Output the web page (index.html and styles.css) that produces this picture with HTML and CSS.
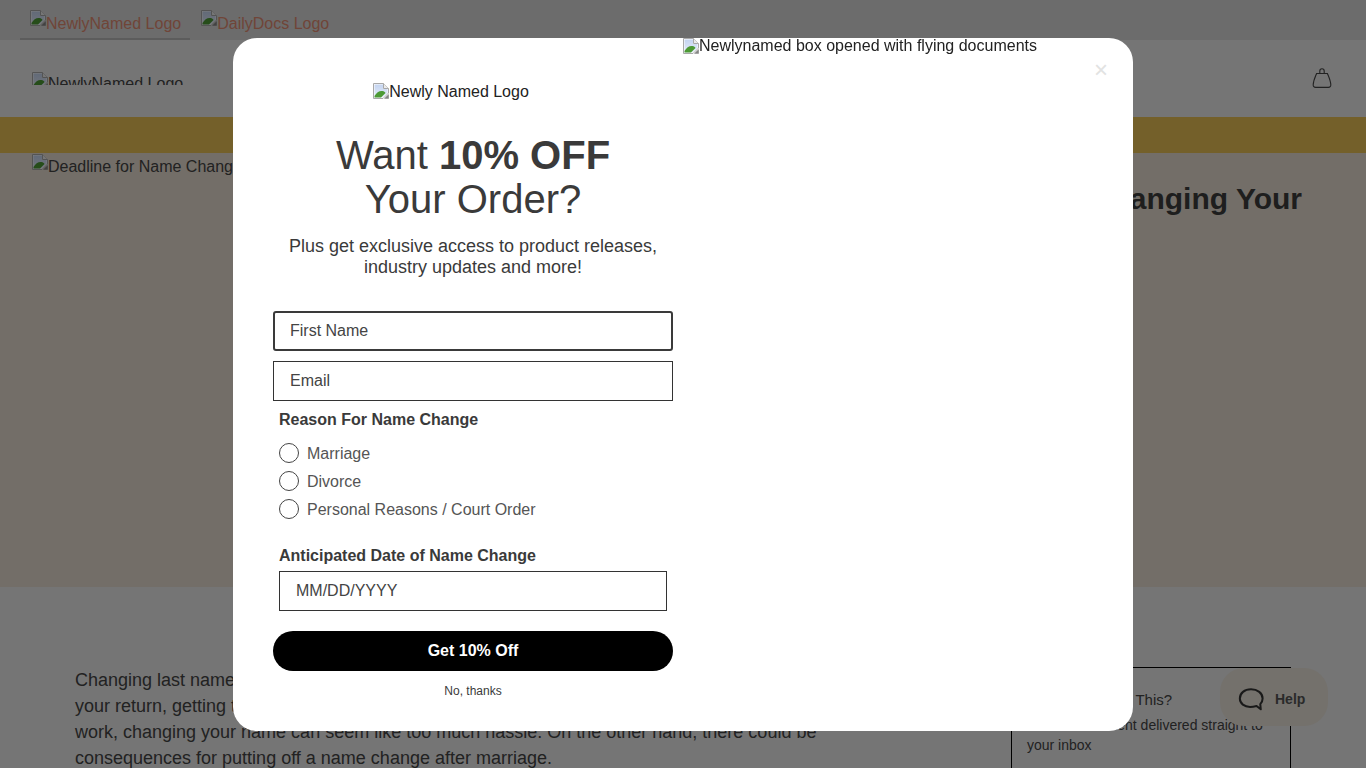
FILE: index.html
```html
<!DOCTYPE html>
<html lang="en">
<head>
<meta charset="utf-8">
<title>Deadline for Changing Your Name</title>
<link rel="stylesheet" href="styles.css">
</head>
<body>
<svg class="defs" width="0" height="0" aria-hidden="true">
  <defs>
    <linearGradient id="sky" x1="0" y1="0" x2="0" y2="1"><stop offset="0" stop-color="#c4d4f0"/><stop offset="1" stop-color="#e4ecfa"/></linearGradient>
    <symbol id="broken" viewBox="0 0 16 16">
      <path d="M0.5 0.5H10.5L15.5 5.5V10L10 15.5H0.5Z" fill="#fff" stroke="#a8a8a8"/>
      <path d="M1.5 1.5H10V6H14.5V10L9.5 14.5H1.5Z" fill="url(#sky)"/>
      <path d="M1.5 14.5V13C3.5 9.5 6.5 7.5 9.5 8C11 8.3 12 9 12.5 10L8 14.5Z" fill="#4c9a34"/>
      <path d="M10.5 0.5V5.5H15.5" fill="#ececec" stroke="#a8a8a8"/>
      <path d="M15.8 11V15.8H11Z" fill="#858585"/>
    </symbol>
  </defs>
</svg>

<nav class="topbar">
  <a class="toplink toplink-active"><svg class="bi bi-top"><use href="#broken"/></svg>NewlyNamed Logo</a>
  <a class="toplink"><svg class="bi bi-top"><use href="#broken"/></svg>DailyDocs Logo</a>
</nav>

<header class="header">
  <div class="site-logo"><svg class="bi bi-site"><use href="#broken"/></svg>NewlyNamed Logo</div>
  <svg class="bag" viewBox="0 0 20 22" fill="none" stroke="#444" stroke-width="1.1">
    <path d="M7.8 6.5V4C7.8 2.6 8.7 1.8 10 1.8S12.2 2.6 12.2 4V6.5"/>
    <path d="M4.6 6.5H15.4C16.6 9.5 18.6 13.5 18.8 17.8C18.9 19.5 18 20.4 16.4 20.4H3.6C2 20.4 1.1 19.5 1.2 17.8C1.4 13.5 3.4 9.5 4.6 6.5Z"/>
  </svg>
</header>

<div class="promo-strip"></div>

<section class="hero">
  <div class="hero-image"><svg class="bi bi-hero"><use href="#broken"/></svg>Deadline for Name Change</div>
  <h1 class="hero-title">Deadline for Changing Your<br>Name</h1>
</section>

<main class="content">
  <article class="article">
    <p>Changing last names after marriage is a big decision. Between filing<br>
    your return, getting the paperwork together and taking time off from<br>
    work, changing your name can seem like too much hassle. On the other hand, there could be<br>
    consequences for putting off a name change after marriage.</p>
  </article>
  <aside class="signup-card">
    <h2 class="signup-title">Want More Like This?</h2>
    <p class="signup-text">Get latest content delivered straight to your inbox</p>
  </aside>
</main>

<div class="help-widget">
  <svg class="help-icon" viewBox="0 0 28 26" fill="none" stroke="#333" stroke-width="2.2">
    <path d="M14 2C7 2 2 6 2 12C2 17.5 7 21 13 21C16 21 18 20.5 20 20L24.5 23.5L24 18C25.5 16.5 26.5 14.5 26.5 12C26.5 6 21 2 14 2Z" stroke-linejoin="round"/>
  </svg>
  <span class="help-label">Help</span>
</div>

<div class="overlay"></div>

<div class="modal">
  <div class="modal-form">
    <div class="form-logo"><svg class="bi bi-form"><use href="#broken"/></svg>Newly Named Logo</div>
    <h2 class="offer-title">Want <b>10% OFF</b><br>Your Order?</h2>
    <p class="offer-sub">Plus get exclusive access to product releases,<br>industry updates and more!</p>
    <div class="field field-focus">First Name</div>
    <div class="field field-next">Email</div>
    <div class="group-label group-reason">Reason For Name Change</div>
    <div class="radios">
      <div class="radio-row"><span class="radio"></span><span class="radio-text">Marriage</span></div>
      <div class="radio-row"><span class="radio"></span><span class="radio-text">Divorce</span></div>
      <div class="radio-row"><span class="radio"></span><span class="radio-text">Personal Reasons / Court Order</span></div>
    </div>
    <div class="group-label group-date">Anticipated Date of Name Change</div>
    <div class="field field-date">MM/DD/YYYY</div>
    <div class="submit">Get 10% Off</div>
    <div class="decline">No, thanks</div>
  </div>
  <div class="modal-art">
    <div class="art-alt"><svg class="bi bi-art"><use href="#broken"/></svg>Newlynamed box opened with flying documents</div>
    <div class="close">&#215;</div>
  </div>
</div>
</body>
</html>
```

FILE: styles.css
```css
* { box-sizing: border-box; }
html, body { height: 100%; overflow: hidden; }
body {
  margin: 0;
  background: #eaeaea;
  color: #444;
  font-family: "Liberation Sans", Arial, sans-serif;
  font-size: 16px;
}
.defs { position: absolute; }
h1, h2, p { margin: 0; }

.bi { width: 16px; height: 16px; display: inline-block; }
.bi-top { vertical-align: 3px; }
.bi-site { vertical-align: 1px; }
.bi-hero { vertical-align: 2px; }
.bi-form { vertical-align: -2px; }
.bi-art { vertical-align: -3px; }

.topbar {
  height: 40px;
  background: #d8d8d8;
  display: flex;
  align-items: flex-start;
  gap: 1px;
  padding: 0 20px;
}
.toplink {
  height: 40px;
  padding: 10px 9px 0 10px;
  color: #e08a70;
  line-height: 16px;
  white-space: nowrap;
}
.toplink-active { border-bottom: 2px solid #b8b8b8; }

.header {
  height: 77px;
  background: #eaeaea;
  display: flex;
  align-items: center;
  justify-content: space-between;
  padding: 0 34px 0 32px;
}
.site-logo {
  height: 13px;
  overflow: hidden;
  line-height: 22px;
  color: #444;
}
.bag { width: 20px; height: 22px; margin-top: -1px; }

.promo-strip { height: 36px; background: #e8c054; }

.hero {
  height: 434px;
  background: #e6dcd0;
  display: flex;
  justify-content: space-between;
  padding: 0 64px 0 32px;
  color: #444;
}
.hero-image { line-height: 28px; white-space: nowrap; }
.hero-title {
  margin-top: 28px;
  font-size: 30px;
  line-height: 36px;
  font-weight: 700;
  color: #3c3c3c;
  white-space: nowrap;
}

.content {
  display: grid;
  grid-template-columns: 1fr 280px;
  padding: 80px 75px 0;
}
.article p {
  font-size: 18px;
  line-height: 26px;
  color: #444;
}
.signup-card {
  height: 200px;
  border: 1px solid #000;
  border-bottom: 0;
  padding: 23px 15px 0;
}
.signup-title { font-size: 15px; line-height: 18px; font-weight: 400; }
.signup-text { margin-top: 6px; font-size: 14px; line-height: 20px; }

.help-widget {
  position: fixed;
  right: 38px;
  bottom: 42px;
  width: 108px;
  height: 58px;
  border-radius: 24px;
  background: #e8e2d8;
  display: flex;
  align-items: center;
  gap: 11px;
  padding: 4px 0 0 18px;
}
.help-icon { width: 26px; height: 25px; }
.help-label { font-size: 14px; font-weight: 700; color: #555; }

.overlay {
  position: fixed;
  inset: 0;
  background: rgba(0, 0, 0, 0.5);
}

.modal {
  position: fixed;
  left: 233px;
  top: 38px;
  width: 900px;
  height: 693px;
  border-radius: 24px;
  background: #fff;
  display: grid;
  grid-template-columns: 450px 450px;
  color: #3a3a3a;
}
.modal-form {
  padding: 45px 10px 0 40px;
  display: flex;
  flex-direction: column;
  align-items: stretch;
}
.form-logo { line-height: 18px; text-align: center; color: #222; padding-right: 44px; }
.offer-title {
  margin-top: 32px;
  font-size: 40px;
  line-height: 44px;
  font-weight: 400;
  text-align: center;
}
.offer-sub {
  margin-top: 15px;
  font-size: 18px;
  line-height: 21px;
  text-align: center;
}
.field {
  height: 40px;
  border: 1px solid #333;
  padding-left: 16px;
  line-height: 38px;
  color: #444;
}
.field-focus {
  margin-top: 33px;
  border: 2px solid #3a3a3a;
  border-radius: 3px;
  padding-left: 15px;
  line-height: 36px;
}
.field-next { margin-top: 10px; }
.group-label {
  margin-left: 6px;
  font-weight: 700;
  line-height: 18px;
}
.group-reason { margin-top: 10px; }
.radios { margin: 10px 0 0 6px; }
.radio-row {
  height: 28px;
  display: flex;
  align-items: center;
  gap: 8px;
  color: #555;
}
.radio-text { margin-top: 2px; }
.radio {
  width: 20px;
  height: 20px;
  border: 1px solid #444;
  border-radius: 50%;
  background: #fff;
}
.group-date { margin-top: 24px; }
.field-date { margin: 6px 6px 0; }
.submit {
  margin-top: 20px;
  height: 40px;
  border-radius: 20px;
  background: #000;
  color: #fff;
  font-weight: 700;
  line-height: 40px;
  text-align: center;
}
.decline {
  margin-top: 13px;
  font-size: 12px;
  line-height: 14px;
  text-align: center;
}
.modal-art {
  position: relative;
  color: #222;
  line-height: 16px;
}
.art-alt { white-space: nowrap; }
.close {
  position: absolute;
  top: 22px;
  right: 25px;
  font-size: 24px;
  line-height: 20px;
  color: #e2e2e2;
}
```
